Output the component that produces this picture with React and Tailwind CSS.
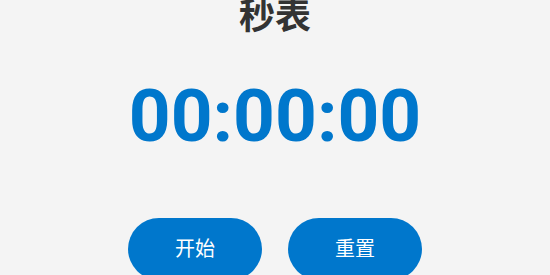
export default function App() {
    return (
        <div className="w-[550px] h-[275px] overflow-hidden bg-[#f4f4f4] flex flex-col items-center font-['Roboto','Noto_Sans_CJK_SC',sans-serif]">
            <h1 className="text-[36px] leading-[36px] -mt-[1px] font-bold text-[#333]">秒表</h1>
            <div className="mt-[45px] text-[73px] leading-none font-bold text-[#0077cc] tabular-nums">00:00:00</div>
            <div className="mt-[65px] flex gap-[26px]">
                <button className="w-[134px] h-[62px] rounded-full bg-[#0077cc] text-white text-[20px]">开始</button>
                <button className="w-[134px] h-[62px] rounded-full bg-[#0077cc] text-white text-[20px]">重置</button>
            </div>
        </div>
    );
}
